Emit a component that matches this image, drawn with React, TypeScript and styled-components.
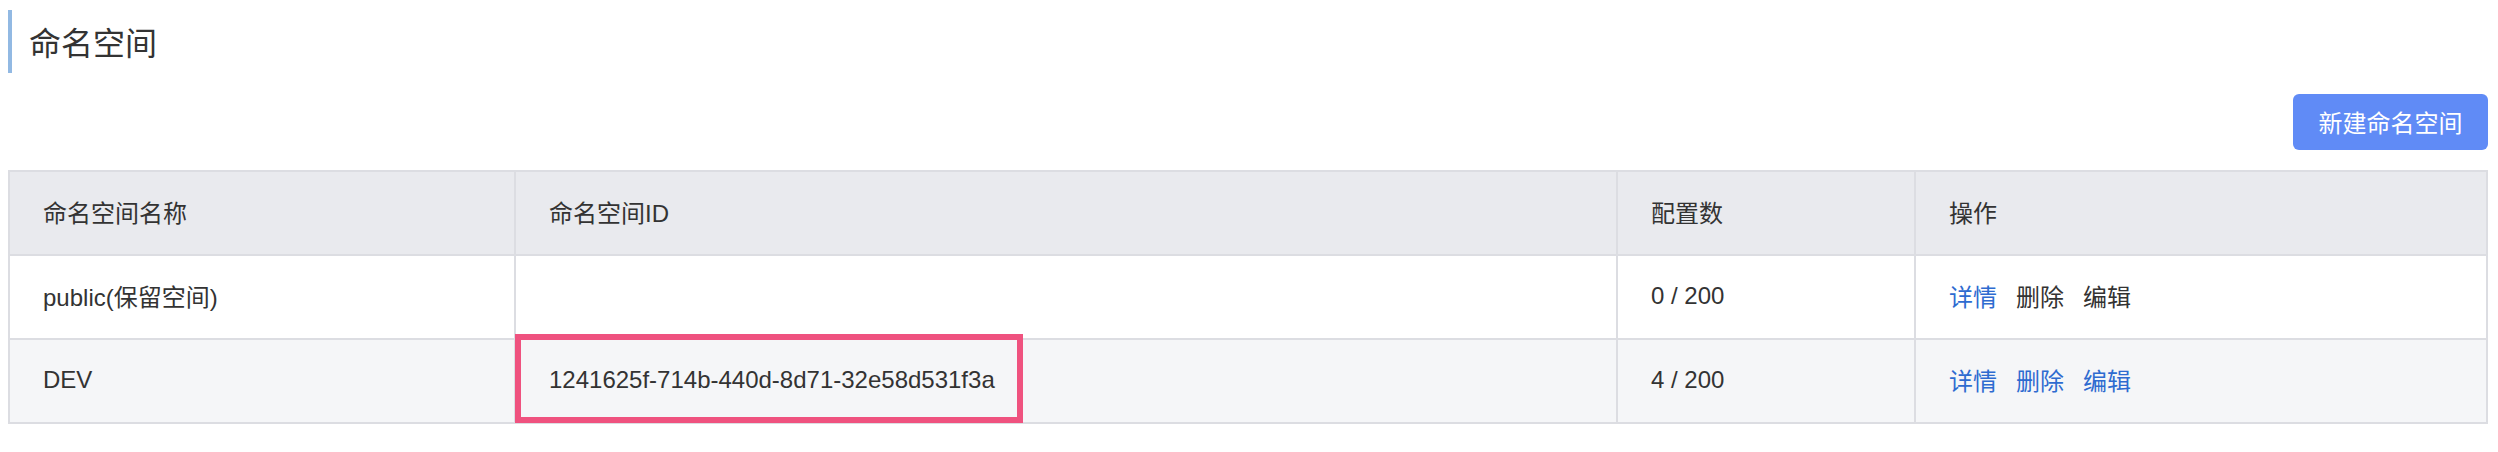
import React from "react";
import styled, { createGlobalStyle } from "styled-components";

const GlobalStyle = createGlobalStyle`
  html, body {
    margin: 0;
    padding: 0;
    background: #ffffff;
  }
  body {
    font-family: "Liberation Sans", "Noto Sans CJK SC", sans-serif;
    color: #333333;
  }
  * {
    box-sizing: border-box;
  }
`;

const Page = styled.div`
  padding: 10px 10px 0 8px;
`;

const Title = styled.h1`
  margin: 0;
  height: 63px;
  display: flex;
  align-items: center;
  border-left: 4px solid #92b9e3;
  padding-left: 17px;
  padding-bottom: 2px;
  font-size: 32px;
  font-weight: 400;
  color: #333333;
`;

const Toolbar = styled.div`
  display: flex;
  justify-content: flex-end;
  margin: 21px 0 20px;
`;

const PrimaryButton = styled.button`
  height: 56px;
  padding: 0 25.5px 2px;
  border: none;
  border-radius: 6px;
  background: #608bf6;
  color: #ffffff;
  font-family: inherit;
  font-size: 24px;
  cursor: pointer;
`;

const Table = styled.div`
  border: 2px solid #dcdde2;
  width: 100%;
`;

type RowKind = "head" | "plain" | "striped";

const rowBg: Record<RowKind, string> = {
  head: "#e9eaee",
  plain: "#ffffff",
  striped: "#f5f6f8",
};

const Row = styled.div<{ $kind: RowKind }>`
  display: grid;
  grid-template-columns: 504px 1102px 298px 1fr;
  height: 82px;
  background: ${(p) => rowBg[p.$kind]};
  & + & {
    height: 84px;
    border-top: 2px solid #dcdde2;
  }
`;

const Cell = styled.div`
  position: relative;
  display: flex;
  align-items: center;
  padding: 0 0 3px 33px;
  font-size: 24px;
  color: #333333;
  white-space: nowrap;
  & + & {
    border-left: 2px solid #dcdde2;
  }
`;

const Highlight = styled.div`
  position: absolute;
  left: -1px;
  top: -6px;
  width: 508px;
  height: 89px;
  border: 6px solid #ef527f;
  pointer-events: none;
`;

const Action = styled.span<{ $active: boolean }>`
  color: ${(p) => (p.$active ? "#2e6bd0" : "#333333")};
  margin-right: 19px;
  cursor: pointer;
`;

interface Ns {
  name: string;
  id: string;
  count: string;
  highlight?: boolean;
  allActive?: boolean;
}

const rows: Ns[] = [
  { name: "public(保留空间)", id: "", count: "0 / 200" },
  {
    name: "DEV",
    id: "1241625f-714b-440d-8d71-32e58d531f3a",
    count: "4 / 200",
    highlight: true,
    allActive: true,
  },
];

export default function App() {
  return (
    <>
      <GlobalStyle />
      <Page>
        <Title>命名空间</Title>
        <Toolbar>
          <PrimaryButton>新建命名空间</PrimaryButton>
        </Toolbar>
        <Table>
          <Row $kind="head">
            <Cell>命名空间名称</Cell>
            <Cell>命名空间ID</Cell>
            <Cell>配置数</Cell>
            <Cell>操作</Cell>
          </Row>
          {rows.map((r, i) => (
            <Row key={r.name} $kind={i % 2 === 0 ? "plain" : "striped"}>
              <Cell>{r.name}</Cell>
              <Cell>
                {r.id}
                {r.highlight && <Highlight />}
              </Cell>
              <Cell>{r.count}</Cell>
              <Cell>
                <Action $active>详情</Action>
                <Action $active={!!r.allActive}>删除</Action>
                <Action $active={!!r.allActive}>编辑</Action>
              </Cell>
            </Row>
          ))}
        </Table>
      </Page>
    </>
  );
}
